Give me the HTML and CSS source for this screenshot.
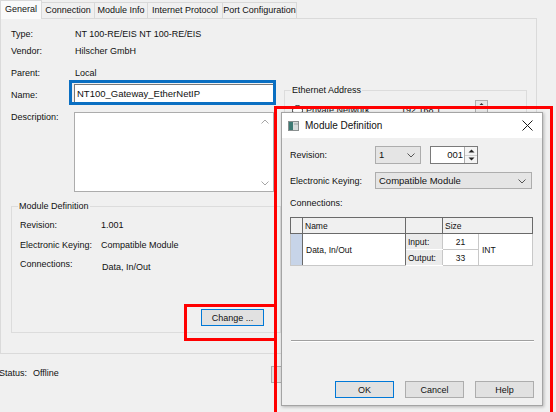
FILE: index.html
```html
<!DOCTYPE html>
<html>
<head>
<meta charset="utf-8">
<link rel="stylesheet" href="styles.css">
</head>
<body>
<div class="window">
  <div class="tabs">
    <div class="tab sel t-gen">General</div>
    <div class="tab t-conn">Connection</div>
    <div class="tab t-mod">Module Info</div>
    <div class="tab t-ip">Internet Protocol</div>
    <div class="tab t-port">Port Configuration</div>
  </div>
  <div class="page">
    <div class="col-left">
      <div class="row r-type"><span class="lbl">Type:</span><span>NT 100-RE/EIS NT 100-RE/EIS</span></div>
      <div class="row r-vendor"><span class="lbl">Vendor:</span><span>Hilscher GmbH</span></div>
      <div class="row r-parent"><span class="lbl">Parent:</span><span>Local</span></div>
      <div class="row r-name"><span class="lbl lbl-name">Name:</span><div class="input">NT100_Gateway_EtherNetIP</div></div>
      <div class="row r-desc"><span class="lbl">Description:</span>
        <div class="textarea">
          <svg class="sb-up" width="8" height="5" viewBox="0 0 8 5"><path d="M0.5 4.5 L4 1 L7.5 4.5" fill="none" stroke="#a6a6a6" stroke-width="1"/></svg>
          <svg class="sb-down" width="8" height="5" viewBox="0 0 8 5"><path d="M0.5 0.5 L4 4 L7.5 0.5" fill="none" stroke="#a6a6a6" stroke-width="1"/></svg>
        </div>
      </div>
      <fieldset class="group mod">
        <legend>Module Definition</legend>
        <div class="grow"><span class="glbl">Revision:</span><span>1.001</span></div>
        <div class="grow"><span class="glbl">Electronic Keying:</span><span>Compatible Module</span></div>
        <div class="grow"><span class="glbl">Connections:</span><span class="gconn">Data, In/Out</span></div>
        <div class="gactions"><button class="btn btn-focus btn-change">Change ...</button></div>
      </fieldset>
    </div>
    <div class="col-right">
      <fieldset class="group eth">
        <legend>Ethernet Address</legend>
        <div class="radio-row">
          <span class="radio"></span><span class="rlabel">Private Network:</span><span class="ip">192.168.1.</span>
          <span class="ipspin"><svg width="11" height="6" viewBox="0 0 11 6"><path d="M3.5 4 L5.5 2 L7.5 4 Z" fill="#333"/></svg></span>
        </div>
      </fieldset>
    </div>
  </div>
  <div class="status">
    <span class="st-lbl">Status:</span><span class="st-val">Offline</span>
    <span class="hidden-btn"></span>
  </div>
</div>

<div class="dialog">
  <div class="titlebar">
    <svg class="ticon" width="11" height="10" viewBox="0 0 11 10">
      <rect x="0.5" y="0.5" width="10" height="9" fill="#d8dcdc" stroke="#8a9090"/>
      <rect x="1" y="1" width="4" height="8" fill="#3d7a74"/>
      <rect x="6" y="2" width="4" height="2" fill="#b8c0c0"/>
    </svg>
    <span class="ttext">Module Definition</span>
    <svg class="tclose" width="11" height="11" viewBox="0 0 11 11"><path d="M0.5 0.5 L10.5 10.5 M10.5 0.5 L0.5 10.5" stroke="#1a1a1a" stroke-width="1"/></svg>
  </div>
  <div class="dbody">
    <div class="drow">
      <span class="dlbl">Revision:</span>
      <div class="combo combo-rev"><span>1</span>
        <svg class="chev" width="8" height="5" viewBox="0 0 8 5"><path d="M0.5 0.5 L4 4 L7.5 0.5" fill="none" stroke="#555" stroke-width="1"/></svg>
      </div>
      <div class="spin">
        <span class="spin-val">001</span>
        <span class="spin-btns">
          <span class="sbtn"><svg width="7" height="4" viewBox="0 0 7 4"><path d="M0.5 3.5 L3.5 0.5 L6.5 3.5 Z" fill="#222"/></svg></span>
          <span class="sbtn"><svg width="7" height="4" viewBox="0 0 7 4"><path d="M0.5 0.5 L3.5 3.5 L6.5 0.5 Z" fill="#222"/></svg></span>
        </span>
      </div>
    </div>
    <div class="drow drow2">
      <span class="dlbl">Electronic Keying:</span>
      <div class="combo combo-key"><span>Compatible Module</span>
        <svg class="chev" width="8" height="5" viewBox="0 0 8 5"><path d="M0.5 0.5 L4 4 L7.5 0.5" fill="none" stroke="#555" stroke-width="1"/></svg>
      </div>
    </div>
    <div class="dconn">Connections:</div>
    <table class="grid">
      <colgroup><col class="c0"><col class="c1"><col class="c2"><col class="c3"><col class="c4"></colgroup>
      <tr class="hrow"><th></th><th>Name</th><th></th><th colspan="2">Size</th></tr>
      <tr class="brow"><td class="rh" rowspan="2"></td><td class="nm" rowspan="2">Data, In/Out</td><td class="io">Input:</td><td class="num">21</td><td class="typ" rowspan="2">INT</td></tr>
      <tr class="brow"><td class="io">Output:</td><td class="num">33</td></tr>
    </table>
    <div class="sep"></div>
    <div class="dbtns">
      <button class="btn btn-focus dbtn">OK</button>
      <button class="btn dbtn">Cancel</button>
      <button class="btn dbtn">Help</button>
    </div>
  </div>
</div>

<div class="mark mark-name"></div>
<div class="mark mark-change"></div>
<div class="mark mark-dialog"></div>
</body>
</html>
```

FILE: styles.css
```css
html, body {
  margin: 0;
  padding: 0;
  background: #f0f0f0;
  width: 556px;
  height: 412px;
  overflow: hidden;
  font-family: "Liberation Sans", Arial, sans-serif;
  font-size: 9px;
  color: #111;
}

.window {
  position: relative;
  width: 556px;
  height: 412px;
}

/* tabs */
.tabs {
  display: flex;
  height: 18px;
  align-items: flex-end;
}
.tab {
  height: 16px;
  box-sizing: border-box;
  padding: 0;
  text-align: center;
  line-height: 15px;
  border: 1px solid #d9d9d9;
  border-bottom: none;
  margin-left: -1px;
  background: #f0f0f0;
  white-space: nowrap;
  overflow: hidden;
}
.tab.sel {
  height: 19px;
  margin-left: 0;
  margin-bottom: -1px;
  background: #fafafa;
  line-height: 17px;
  position: relative;
  z-index: 1;
}
.t-gen { width: 42px; }
.t-conn { width: 54px; }
.t-mod { width: 54px; }
.t-ip { width: 76px; }
.t-port { width: 75px; }

/* tab page */
.page {
  display: flex;
  width: 537px;
  height: 336px;
  box-sizing: border-box;
  border: 1px solid #dadada;
  background: #f0f0f0;
}
.col-left {
  width: 281px;
  padding: 6px 0 0 10px;
  box-sizing: border-box;
}
.row {
  display: flex;
  align-items: center;
  height: 17px;
}
.lbl { width: 64px; flex: none; }
.r-parent { margin-top: 5px; }
.r-name { margin-top: 3px; height: 19px; }
.lbl-name { width: 63px; padding-top: 2px; }
.input {
  width: 200px;
  height: 19px;
  box-sizing: border-box;
  border: 1px solid #7a7a7a;
  background: #fff;
  line-height: 17px;
  padding-left: 2px;
  font-size: 9.5px;
}
.r-desc {
  margin-top: 9px;
  height: 80px;
  align-items: flex-start;
}
.r-desc .lbl { width: 63px; line-height: 11px; }
.textarea {
  position: relative;
  width: 200px;
  height: 80px;
  box-sizing: border-box;
  border: 1px solid #acacac;
  background: #fff;
}
.sb-up { position: absolute; right: 4px; top: 6px; }
.sb-down { position: absolute; right: 4px; bottom: 5px; }

/* group boxes */
.group {
  margin: 0;
  border: 1px solid #dcdcdc;
  padding: 0;
}
.group legend {
  padding: 0 1px;
  margin-left: 0;
  line-height: 11px;
}
.mod {
  margin-top: 9px;
  width: 270px;
  box-sizing: border-box;
  padding: 7px 0 6px 8px;
}
.mod legend { margin-left: -2px; }
.grow {
  display: flex;
  height: 12px;
  align-items: center;
  margin-bottom: 7.5px;
}
.glbl { width: 81px; flex: none; }
.gconn { padding-top: 5px; padding-left: 1px; }
.gactions {
  display: flex;
  justify-content: flex-end;
  padding-right: 16px;
  margin-top: 39px;
}

.btn {
  font-family: "Liberation Sans", Arial, sans-serif;
  font-size: 9px;
  color: #111;
  background: #e1e1e1;
  border: 1px solid #adadad;
  padding: 0;
  margin: 0;
  height: 17px;
  box-sizing: border-box;
}
.btn-focus { border: 1px solid #0078d7; }
.btn-change { width: 63px; }

.col-right {
  padding-left: 2px;
  padding-top: 66px;
}
.eth {
  width: 243px;
  box-sizing: border-box;
  height: 60px;
  padding: 8px 0 0 7px;
}
.eth legend { margin-left: -1px; }
.radio-row {
  display: flex;
  align-items: center;
  height: 12px;
}
.radio {
  width: 9px;
  height: 9px;
  border: 1px solid #333;
  border-radius: 50%;
  background: #fff;
  margin-right: 3px;
}
.rlabel { width: 95px; }
.ip { width: 74px; }
.ipspin {
  display: block;
  width: 11px;
  height: 12px;
  border: 1px solid #adadad;
  background: #e6e6e6;
  margin-top: -6px;
}
.ipspin svg { display: block; }

/* status */
.status {
  display: flex;
  align-items: flex-start;
  width: 332px;
  height: 17px;
  margin-top: 12px;
  margin-left: -1px;
}
.st-lbl { line-height: 14px; margin-right: 6px; }
.st-val { line-height: 14px; }
.hidden-btn {
  margin-left: auto;
  width: 60px;
  height: 17px;
  box-sizing: border-box;
  background: #e1e1e1;
  border: 1px solid #adadad;
}

/* dialog */
.dialog {
  position: absolute;
  left: 281px;
  top: 112px;
  width: 262px;
  height: 294px;
  box-sizing: border-box;
  border: 1px solid #a4a4a4;
  background: #f0f0f0;
  box-shadow: 1px 1px 3px rgba(0,0,0,0.25);
}
.titlebar {
  display: flex;
  align-items: center;
  height: 25px;
  background: #fff;
  padding-left: 6px;
}
.ticon { flex: none; }
.ttext {
  margin-left: 6px;
  font-size: 10px;
  flex: 1;
}
.tclose { margin-right: 9px; }

.dbody {
  padding: 8px 9px 0 8px;
}
.drow {
  display: flex;
  align-items: center;
  height: 18px;
}
.drow2 { margin-top: 8px; height: 17px; }
.dlbl { width: 85px; flex: none; }
.combo {
  position: relative;
  height: 18px;
  box-sizing: border-box;
  border: 1px solid #adadad;
  background: #e5e5e5;
  line-height: 16px;
  padding-left: 3px;
  font-size: 9.5px;
}
.combo-rev { width: 46px; }
.combo-key { width: 157px; height: 17px; line-height: 15px; }
.chev { position: absolute; right: 5px; top: 6px; }
.spin {
  display: flex;
  margin-left: 9px;
  height: 18px;
  box-sizing: border-box;
  border: 1px solid #7a7a7a;
  background: #fff;
}
.spin-val {
  width: 32px;
  text-align: right;
  line-height: 16px;
  padding-right: 1px;
  font-size: 9.5px;
}
.spin-btns {
  display: flex;
  flex-direction: column;
  width: 12px;
  border-left: 1px solid #adadad;
}
.sbtn {
  flex: 1;
  display: flex;
  align-items: center;
  justify-content: center;
  background: #f4f4f4;
}
.sbtn + .sbtn { border-top: 1px solid #d0d0d0; }
.sbtn svg { display: block; }

.dconn {
  margin-top: 9px;
  line-height: 11px;
}
.grid {
  margin-top: 8px;
  border-collapse: collapse;
  width: 242px;
  table-layout: fixed;
  border: 1px solid #5a5a5a;
  background: #fff;
}
.c0 { width: 12px; }
.c1 { width: 103px; }
.c2 { width: 37px; }
.c3 { width: 36px; }
.c4 { width: 54px; }
.grid th {
  height: 15px;
  padding: 0 0 0 2px;
  text-align: left;
  font-weight: normal;
  background: #f0f0f0;
  border: 1px solid #6a6a6a;
  font-size: 8.5px;
}
.grid td {
  height: 15px;
  padding: 0 0 0 2px;
  border: 1px solid #c8c8c8;
  font-size: 8.5px;
}
.grid .rh { background: #c7d4e8; border-right: 1px solid #6a6a6a; }
.grid .nm { border-right: 1px solid #6a6a6a; padding-left: 3px; }
.grid .io { background: #ececec; border-color: #fff #c8c8c8; }
.grid .num { text-align: center; padding: 0; }
.grid .typ { padding-left: 3px; }

.sep {
  margin-top: 74px;
  height: 0;
  border-top: 1px solid #a0a0a0;
  border-bottom: 1px solid #fff;
  margin-right: -1px;
  margin-left: 1px;
}
.dbtns {
  display: flex;
  justify-content: flex-end;
  gap: 11px;
  margin-top: 39px;
  margin-right: -1px;
}
.dbtn { width: 59px; }

/* annotation marks */
.mark {
  position: absolute;
  box-sizing: border-box;
  border: 3px solid #ff0000;
}
.mark-name {
  left: 69px; top: 80px; width: 207px; height: 25px;
  border-color: #0a6fc2;
}
.mark-change {
  left: 184px; top: 304px; width: 93px; height: 37px;
}
.mark-dialog {
  left: 274px; top: 106px; width: 279px; height: 320px;
}
```
